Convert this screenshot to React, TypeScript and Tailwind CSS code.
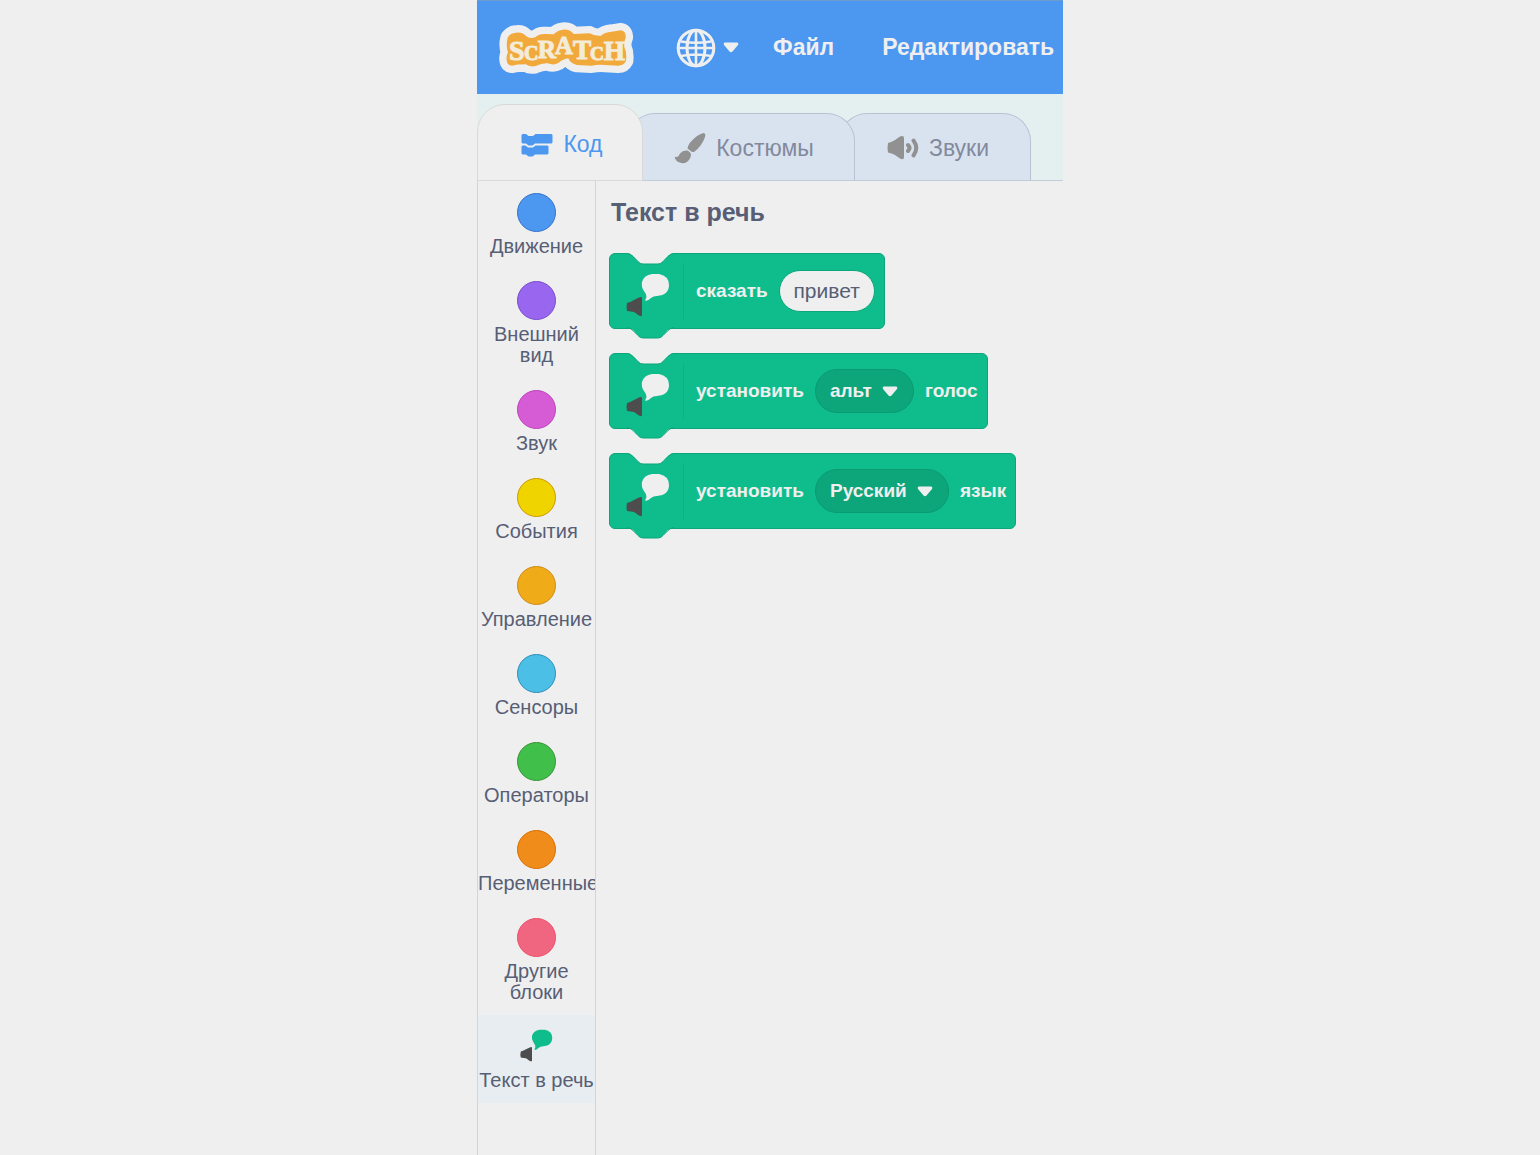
import type { ReactNode } from "react";

const categories = [
  { label: "Движение", color: "bg-[#4c97f0] border-[#3373cc]" },
  { label: "Внешний вид", color: "bg-[#9966f0] border-[#774dcb]" },
  { label: "Звук", color: "bg-[#d65cd6] border-[#bd42bd]" },
  { label: "События", color: "bg-[#f0d400] border-[#cc9900]" },
  { label: "Управление", color: "bg-[#f0ab19] border-[#cf8b17]" },
  { label: "Сенсоры", color: "bg-[#4cbfe6] border-[#2e8eb8]" },
  { label: "Операторы", color: "bg-[#40bf4a] border-[#389438]" },
  { label: "Переменные", color: "bg-[#f08c1a] border-[#db6e00]" },
  { label: "Другие блоки", color: "bg-[#f06680] border-[#f04d6a]" },
];

const logoLetters = [
  { ch: "S", x: 42, y: 130, size: "text-[84px]" },
  { ch: "C", x: 87, y: 132, size: "text-[60px]" },
  { ch: "R", x: 128, y: 124, size: "text-[76px]" },
  { ch: "A", x: 180, y: 112, size: "text-[74px]" },
  { ch: "T", x: 234, y: 129, size: "text-[82px]" },
  { ch: "C", x: 285, y: 131, size: "text-[58px]" },
  { ch: "H", x: 326, y: 130, size: "text-[82px]" },
];

function Logo() {
  return (
    <svg viewBox="12 20 405 150" className="h-[50px] w-[135px] shrink-0 overflow-visible" role="img" aria-label="Scratch">
      <path
        d="M38 64Q46 50 62 49Q80 46 92 58Q106 70 122 62Q132 52 150 53L176 54Q186 42 204 40Q224 38 236 53L284 51Q298 60 318 58Q328 48 350 46L378 42Q394 46 392 64Q386 78 388 92Q396 110 393 134Q386 148 370 148L330 146Q310 144 290 148L246 146Q226 142 220 126Q200 130 190 140Q176 148 158 141Q140 140 122 149Q104 153 92 144Q66 144 52 148Q36 148 35 130Q33 120 39 108Q32 88 38 64Z"
        fill="#f2a93b"
        stroke="#efefef"
        strokeWidth="44"
        strokeLinejoin="round"
        paintOrder="stroke"
      />
      {logoLetters.map((l, i) => (
        <text
          key={i}
          x={l.x}
          y={l.y}
          fill="#f3ecd9"
          stroke="#f3ecd9"
          strokeWidth="3"
          className={`${l.size} font-['Liberation_Serif']`}
        >
          {l.ch}
        </text>
      ))}
    </svg>
  );
}

function Globe() {
  return (
    <svg viewBox="0 0 40 40" className="size-10" fill="none" stroke="#efefef" strokeWidth="3" aria-hidden="true">
      <circle cx="20" cy="20" r="17.8" />
      <ellipse cx="20" cy="20" rx="9" ry="17.8" />
      <path d="M20 2V38M2 20H38M5 13.5Q20 16 35 13.5M5 28Q20 25 35 28" strokeWidth="2.6" />
    </svg>
  );
}

function Caret({ className = "" }: { className?: string }) {
  return (
    <svg viewBox="0 0 16 11" className={`h-[11px] w-4 ${className}`} aria-hidden="true">
      <path d="M2 .5H14Q16 1 15 3L9.500 9.500Q8 10.800 6.500 9.500L1 3Q0 1 2 .5Z" fill="#efefef" />
    </svg>
  );
}

function CodeIcon() {
  return (
    <svg viewBox="0 0 32 24" className="h-6 w-8" fill="#4c97f0" aria-hidden="true">
      <path d="M1.500 1H5L7.500 3H12L14.500 1H30.500L31.500 2V9.500L30.500 10.500H14L11.500 12.500H7.500L5 10.500H1.500L.5 9.500V2Z" />
      <path d="M1.500 12.500H4.500L7 14.500H12L14.500 12.500H26.500L27.500 13.500V20.500L26.500 21.500H14L11.500 23.500H7.500L5 21.500H1.500L.5 20.500V13.500Z" />
    </svg>
  );
}

function BrushIcon() {
  return (
    <svg viewBox="0 0 32 32" className="size-8" fill="#919191" aria-hidden="true">
      <path d="M30 1Q32 2 31 5Q28 14 20 20Q18 20.500 16 18.500L13.500 16.500Q14 11 23 4Q28 1 30 1Z" />
      <path d="M13 18.500Q17 20 17 23Q16 29 11 31Q4 32 1 26.500Q0 24 3 25Q5 24 6 21.500Q9 18 13 18.500Z" />
    </svg>
  );
}

function SoundIcon() {
  return (
    <svg viewBox="0 0 32 26" className="h-[26px] w-8" aria-hidden="true">
      <path d="M1 8Q5 7 8 5L13 1.500Q17 0 17 3V22Q17 25.500 13 23.500L8 20Q5 18 1 17.500Q0 13 1 8Z" fill="#919191" />
      <path d="M21 10Q24 13 21 16M26.500 5.500Q32 13 26.500 20.500" fill="none" stroke="#919191" strokeWidth="4" strokeLinecap="round" />
    </svg>
  );
}

function SpeechIcon({ bubble, className }: { bubble: string; className: string }) {
  return (
    <svg viewBox="0 0 44 44" className={className} aria-hidden="true">
      <path d="M26 1H33Q43 3 43 12Q43 22 31 23Q27 23 25 25Q22 28 19.500 28Q19 27 20.500 24Q20.500 21 18 18Q15 14 16 9Q18 2 26 1Z" fill={bubble} />
      <path d="M1 30Q5 29 8 27L13 24.500Q16 23.500 16 25V42Q16 44 13 42.500L8 39Q5 38.500 1 38Q0 34 1 30Z" fill="#4d4d4d" />
    </svg>
  );
}

function Block({ children }: { children: ReactNode }) {
  return (
    <div className="relative flex h-[76px] w-fit items-center rounded-md border border-[#0da57a] bg-[#0fbd8c] pl-4 pr-[9px]">
      <svg viewBox="0 0 48 12" className="absolute -top-px left-[17px] h-3 w-12" aria-hidden="true">
        <path d="M0 0Q3 0 6 3L11 8.500Q13 11 16 11H31Q34 11 36 8.500L41 3Q44 0 47 0Z" fill="#efefef" />
        <path d="M0 .5Q3 .5 6 3.500L11 8.500Q13 11 16 11H31Q34 11 36 8.500L41 3.500Q44 .5 47 .5" fill="none" stroke="#0da57a" />
      </svg>
      <svg viewBox="0 0 48 12" className="absolute -bottom-[11px] left-[17px] h-3 w-12" aria-hidden="true">
        <path d="M0 0Q3 0 6 3L11 8.500Q13 11 16 11H31Q34 11 36 8.500L41 3Q44 0 47 0Z" fill="#0fbd8c" />
        <path d="M0 .5Q3 .5 6 3.500L11 8.500Q13 11 16 11H31Q34 11 36 8.500L41 3.500Q44 .5 47 .5" fill="none" stroke="#0da57a" />
      </svg>
      <SpeechIcon bubble="#efefef" className="mt-2 size-11" />
      <span className="ml-[13px] mr-3 h-14 w-px bg-[#0eb083]" />
      <div className="flex items-center gap-[11px] text-[19px] font-bold text-[#efefef]">{children}</div>
    </div>
  );
}

function Dropdown({ label, value, options, width }: { label: string; value: string; options: string[]; width: string }) {
  return (
    <span className="relative flex items-center">
      <select
        aria-label={label}
        defaultValue={value}
        className={`h-11 appearance-none rounded-full border border-[#0b9a72] bg-[#0da57a] pl-[14px] font-bold ${width}`}
      >
        {options.map((o) => (
          <option key={o}>{o}</option>
        ))}
      </select>
      <Caret className="pointer-events-none absolute right-4" />
    </span>
  );
}

export default function App() {
  return (
    <div className="flex min-h-screen justify-center bg-[#efefef] font-['Liberation_Sans',sans-serif] text-[#575e75]">
      <div className="flex w-full max-w-[586px] flex-col overflow-hidden">
        <header className="flex h-[94px] items-center border-t border-[#6d9bd0] bg-[#4c97f0] pl-[22px] text-[23px] font-bold text-[#efefef]">
          <Logo />
          <button aria-label="Язык" className="ml-[42px] flex items-center gap-[7px]">
            <Globe />
            <Caret />
          </button>
          <button className="ml-[34px]">Файл</button>
          <button className="ml-12">Редактировать</button>
        </header>

        <div role="tablist" className="flex h-[87px] items-end border-b border-[#c2cbd8] bg-[#e4f0f0] text-[23px]">
          <button
            role="tab"
            aria-selected="true"
            className="relative z-20 -mb-px flex h-[77px] w-[166px] items-center justify-center gap-[10px] rounded-t-[28px] border border-[#d9d9d9] bg-[#efefef] pl-1 pt-1 text-[#4c97f0]"
          >
            <CodeIcon />
            Код
          </button>
          <button
            role="tab"
            aria-selected="false"
            className="relative z-10 -ml-4 flex h-[67px] w-[228px] items-center justify-center gap-[10px] rounded-t-[28px] border border-b-0 border-[#b9c2d3] bg-[#d9e3f0] pl-[6px] pt-0.5 text-[#83899c]"
          >
            <BrushIcon />
            Костюмы
          </button>
          <button
            role="tab"
            aria-selected="false"
            className="-ml-4 flex h-[67px] w-[192px] items-center justify-center gap-[10px] rounded-t-[28px] border border-b-0 border-[#b9c2d3] bg-[#d9e3f0] pl-[6px] pt-0.5 text-[#83899c]"
          >
            <SoundIcon />
            Звуки
          </button>
        </div>

        <div className="flex grow">
          <nav className="w-[119px] shrink-0 border-x border-[#d4d4d4] text-[20px] leading-[21px]">
            {categories.map((c) => (
              <button key={c.label} className="flex w-full flex-col items-center gap-1 overflow-hidden pb-3 pt-3">
                <span className={`size-[39px] rounded-full border ${c.color}`} />
                <span className={c.label.includes(" ") ? "px-3" : "max-w-full"}>{c.label}</span>
              </button>
            ))}
            <button className="flex w-full flex-col items-center gap-2 overflow-hidden whitespace-nowrap bg-[#e7edf0] pb-3 pt-[14px]">
              <SpeechIcon bubble="#0fbd8c" className="size-[33px]" />
              Текст в речь
            </button>
          </nav>

          <main className="pl-[13px] pt-[15px]">
            <h2 className="pl-0.5 text-[25px] font-bold leading-8">Текст в речь</h2>
            <div className="mt-[25px] flex flex-col gap-6">
              <Block>
                <span>сказать</span>
                <input
                  aria-label="сказать"
                  defaultValue="привет"
                  className="h-[42px] w-[96px] rounded-full border border-[#0da57a] bg-[#efefef] text-center text-[21px] font-normal text-[#575e75]"
                />
              </Block>
              <Block>
                <span>установить</span>
                <Dropdown label="голос" value="альт" options={["альт", "тенор", "писк", "гигант", "котёнок"]} width="w-[99px]" />
                <span>голос</span>
              </Block>
              <Block>
                <span>установить</span>
                <Dropdown label="язык" value="Русский" options={["Русский", "English", "Deutsch"]} width="w-[134px]" />
                <span>язык</span>
              </Block>
            </div>
          </main>
        </div>
      </div>
    </div>
  );
}
